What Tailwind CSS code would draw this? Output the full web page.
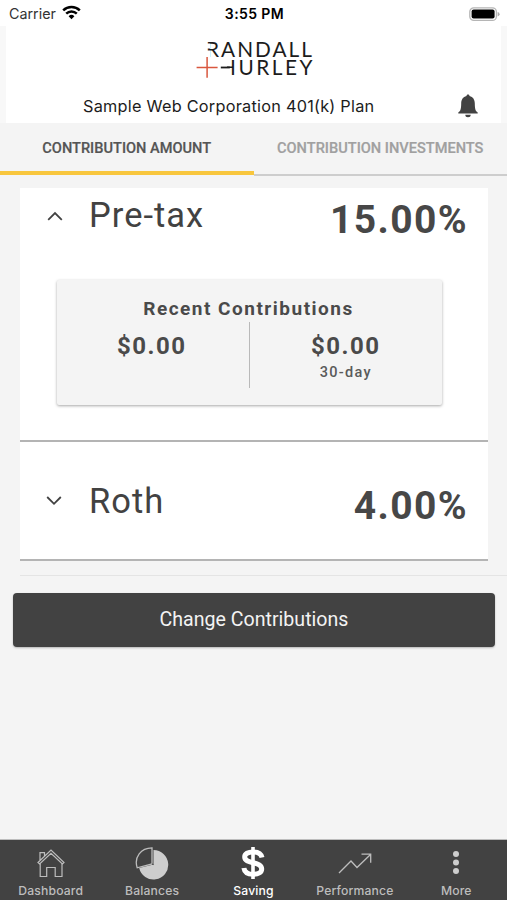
<!DOCTYPE html>
<html lang="en">
<head>
  <meta charset="UTF-8" />
  <meta name="viewport" content="width=device-width, initial-scale=1.0" />
  <title>Contribution Amount</title>
  <script src="https://cdn.jsdelivr.net/npm/@tailwindcss/browser@4"></script>
</head>
<body class="w-[507px] h-[900px] overflow-hidden flex flex-col bg-[#f4f4f4] font-['Roboto',sans-serif] text-[#424242]">

  <!-- Status bar -->
  <div class="h-[26px] shrink-0 bg-white grid grid-cols-3 items-center pl-[9px] pr-[7px] pt-[2px] font-['Inter',sans-serif] text-black leading-none">
    <div class="flex items-center gap-[6px]">
      <span class="text-[14.3px] text-[#333]">Carrier</span>
      <svg class="-mt-[2px]" width="19" height="15" viewBox="0 0 19 15" fill="none" stroke="#000" stroke-width="2.5">
        <path d="M1.2 5.4a12 12 0 0 1 16.6 0" />
        <path d="M4.2 8.6a7.6 7.6 0 0 1 10.6 0" />
        <path d="M9.5 14.2 6.6 11.2a4.2 4.2 0 0 1 5.8 0z" fill="#000" stroke="none" />
      </svg>
    </div>
    <span class="text-center text-[14px] font-semibold tracking-[0.4px] whitespace-nowrap">3:55 PM</span>
    <svg class="justify-self-end" width="31" height="15" viewBox="0 0 31 15">
      <rect x="0.8" y="0.8" width="26.6" height="12.6" rx="4" fill="#fff" stroke="#b5b5b5" stroke-width="1.3" />
      <rect x="2.6" y="2.6" width="23" height="9" rx="2" fill="#000" />
      <path d="M28.6 5v4.4q2-.6 2-2.2T28.6 5z" fill="#aaa" />
    </svg>
  </div>

  <!-- Brand header -->
  <header class="h-[97px] shrink-0 bg-white border-x-[6px] border-[#f8f8f8] flex flex-col">
    <svg class="mt-[4px] ml-[190px] shrink-0" width="120" height="56" viewBox="196 30 120 56">
      <g font-family="Lato, sans-serif" font-size="20.8" fill="#1c1c1c">
        <text x="206" y="56.5" textLength="106">RANDALL</text>
        <text x="220" y="75" textLength="92.5">HURLEY</text>
      </g>
      <!-- left stems of the R and the H are cut away -->
      <path d="M204 43.5h6.2v5H204zM204 50.500h6.2v8H204zM218 58.500h9v14.500h-9zM218 73h9v4h-9z" fill="#fff" />
      <path d="M220.800 67.500h9" stroke="#1c1c1c" stroke-width="1.800" />
      <path d="M207.1 57v20.7M196.6 67.4h21" stroke="#d9573f" stroke-width="1.5" />
    </svg>
    <div class="flex items-center h-[27px] mt-[7px] pl-[77px] pr-[23px]">
      <span class="flex-1 font-['Inter',sans-serif] text-[16.3px] tracking-[0.24px] text-[#1c1c1c] whitespace-nowrap">Sample Web Corporation 401(k) Plan</span>
      <svg class="-mt-[2px]" width="20" height="24" viewBox="0 0 20 24" fill="#424242">
        <path d="M10 .5c1 0 1.5.6 1.5 1.5 3.600.8 5.200 3.700 5.300 7.500.1 5.500.6 7.500 2.900 8.900v1.100H.3v-1.100c2.300-1.400 2.800-3.400 2.900-8.900.1-3.800 1.700-6.700 5.300-7.500C8.500 1.100 9 .5 10 .5zM7.300 20.800h5.400a2.700 2.500 0 0 1-5.400 0z" />
      </svg>
    </div>
  </header>

  <!-- Tabs -->
  <nav class="h-[53px] shrink-0 grid grid-cols-2 text-center text-[14.6px] font-medium leading-[50px] whitespace-nowrap">
    <div class="border-b-[4px] border-[#f8c63d] text-[#555] [-webkit-text-stroke:0.2px] h-[52px]">CONTRIBUTION AMOUNT</div>
    <div class="border-b-2 border-[#cdcdcd] text-[#a0a0a0] [-webkit-text-stroke:0.2px]">CONTRIBUTION INVESTMENTS</div>
  </nav>

  <main class="flex-1 pt-[12px]">
    <div class="ml-5 w-[468px]">
      <section class="h-[254px] bg-white border-b-2 border-[#b4b4b4]">
        <div class="flex items-start pl-[27px] pr-[21px]">
          <svg class="mt-[22px]" width="16" height="12" viewBox="0 0 16 12" fill="none" stroke="#424242" stroke-width="1.8">
            <path d="M1.200 9.800 8 3l6.800 6.800" />
          </svg>
          <h2 class="flex-1 ml-[26px] mt-[5px] text-[34.5px] leading-[44px] tracking-[1px]">Pre-tax</h2>
          <span class="mt-[9px] text-[39px] leading-[46px] font-bold tracking-[1.4px] -mr-[1px] text-[#474747]">15.00%</span>
        </div>
        <div class="ml-[37px] mt-[37px] w-[385px] h-[125px] rounded-[2px] bg-[#f4f4f4] shadow-[0_1px_3px_rgba(0,0,0,0.35)] text-center font-bold text-[#4a4a4a]">
          <h3 class="pt-[16px] -ml-[2px] text-[19px] leading-[26px] tracking-[1.5px]">Recent Contributions</h3>
          <div class="grid grid-cols-2 h-[66px] -ml-[2px]">
            <div class="pt-[10px] text-[24px] leading-[28px] tracking-[1.5px]">$0.00</div>
            <div class="border-l border-[#b9b9b9] pt-[10px] text-[24px] leading-[28px] tracking-[1.5px]">$0.00
              <div class="pt-px text-[14.5px] leading-[24px] tracking-[1.3px] font-medium text-[#5a5a5a]">30-day</div>
            </div>
          </div>
        </div>
      </section>

      <section class="h-[119px] bg-white border-b-2 border-[#b4b4b4] flex items-start pl-[26px] pr-[21px]">
        <svg class="mt-[53px]" width="16" height="12" viewBox="0 0 16 12" fill="none" stroke="#424242" stroke-width="1.8">
          <path d="m1.200 2 6.800 6.800L14.800 2" />
        </svg>
        <h2 class="flex-1 ml-[27px] mt-[37px] text-[34.5px] leading-[44px] tracking-[1px]">Roth</h2>
        <span class="mt-[41px] text-[39px] leading-[46px] font-bold tracking-[1.4px] -mr-[1px] text-[#474747]">4.00%</span>
      </section>
    </div>

    <div class="ml-5 mt-[14px] border-t border-[#e4e4e4]"></div>
    <button class="block ml-[13px] mt-[17px] w-[482px] h-[54px] rounded-[4px] bg-[#424242] text-[#f3f3f3] text-[19.6px] shadow-[0_1px_2px_rgba(0,0,0,0.25)]">Change Contributions</button>
  </main>

  <!-- Bottom navigation -->
  <footer class="h-[61px] shrink-0 bg-[#424242] border-t border-[#bdbdbd] grid grid-cols-5 text-center font-['Inter',sans-serif] text-[12.2px] font-medium tracking-[0.15px] text-[#bdbdbd]">
    <div class="flex flex-col items-center">
      <svg class="mt-[6px]" width="36" height="34" viewBox="0 0 36 34" fill="none" stroke="#bdbdbd" stroke-width="1.2">
        <path d="M5 16.500 18 4l13 12.500-1.600 1.400L18 7.200 6.600 17.900zM7 14.500V6.600h4.500v3.700" />
        <path d="M7.200 17.500V30.500h6.500V21.500h8.500v9h6.800V17.500" />
      </svg>
      <span class="leading-[18px] mt-[2px]">Dashboard</span>
    </div>
    <div class="flex flex-col items-center">
      <svg class="mt-[6px]" width="36" height="34" viewBox="0 0 36 34">
        <path d="M19.500 4.100A14.700 14.700 0 1 1 5.200 22L19.500 18.500z" fill="#cdcdcd" />
        <path d="M18 1.800V18L3.200 21.800C-.3 11 7 1.900 18 1.800z" fill="#424242" stroke="#bdbdbd" stroke-width="1.300" />
        <path d="M18 18l1.600.6" stroke="#424242" stroke-width="1" />
      </svg>
      <span class="leading-[18px] mt-[2px]">Balances</span>
    </div>
    <div class="flex flex-col items-center text-white">
      <svg class="mt-[6px]" width="36" height="34" viewBox="0 0 36 34" fill="none" stroke="#fff" stroke-width="5">
        <path d="M27 11.500C26 7.300 22.500 6 18 6c-5 0-8.300 1.700-8.300 5 0 3.600 3.600 4.600 8.300 5.700 5 1.200 8.700 2.400 8.700 6.300 0 3.500-3.500 5.300-8.500 5.300-5 0-8.700-1.900-9.300-6.300" />
        <path d="M18 1v32" stroke-width="3.600" />
      </svg>
      <span class="leading-[18px] mt-[2px]">Saving</span>
    </div>
    <div class="flex flex-col items-center">
      <svg class="mt-[6px]" width="36" height="34" viewBox="0 0 36 34" fill="none" stroke="#bdbdbd" stroke-width="1.300">
        <path d="M2 27 14 15l6 6.500L33.500 8.500M24.500 8.200h9.200v8.600" />
      </svg>
      <span class="leading-[18px] mt-[2px]">Performance</span>
    </div>
    <div class="flex flex-col items-center">
      <svg class="mt-[6px]" width="36" height="34" viewBox="0 0 36 34" fill="#cdcdcd">
        <circle cx="18" cy="8" r="3" />
        <circle cx="18" cy="16.500" r="3" />
        <circle cx="18" cy="25" r="3" />
      </svg>
      <span class="leading-[18px] mt-[2px]">More</span>
    </div>
  </footer>
</body>
</html>
